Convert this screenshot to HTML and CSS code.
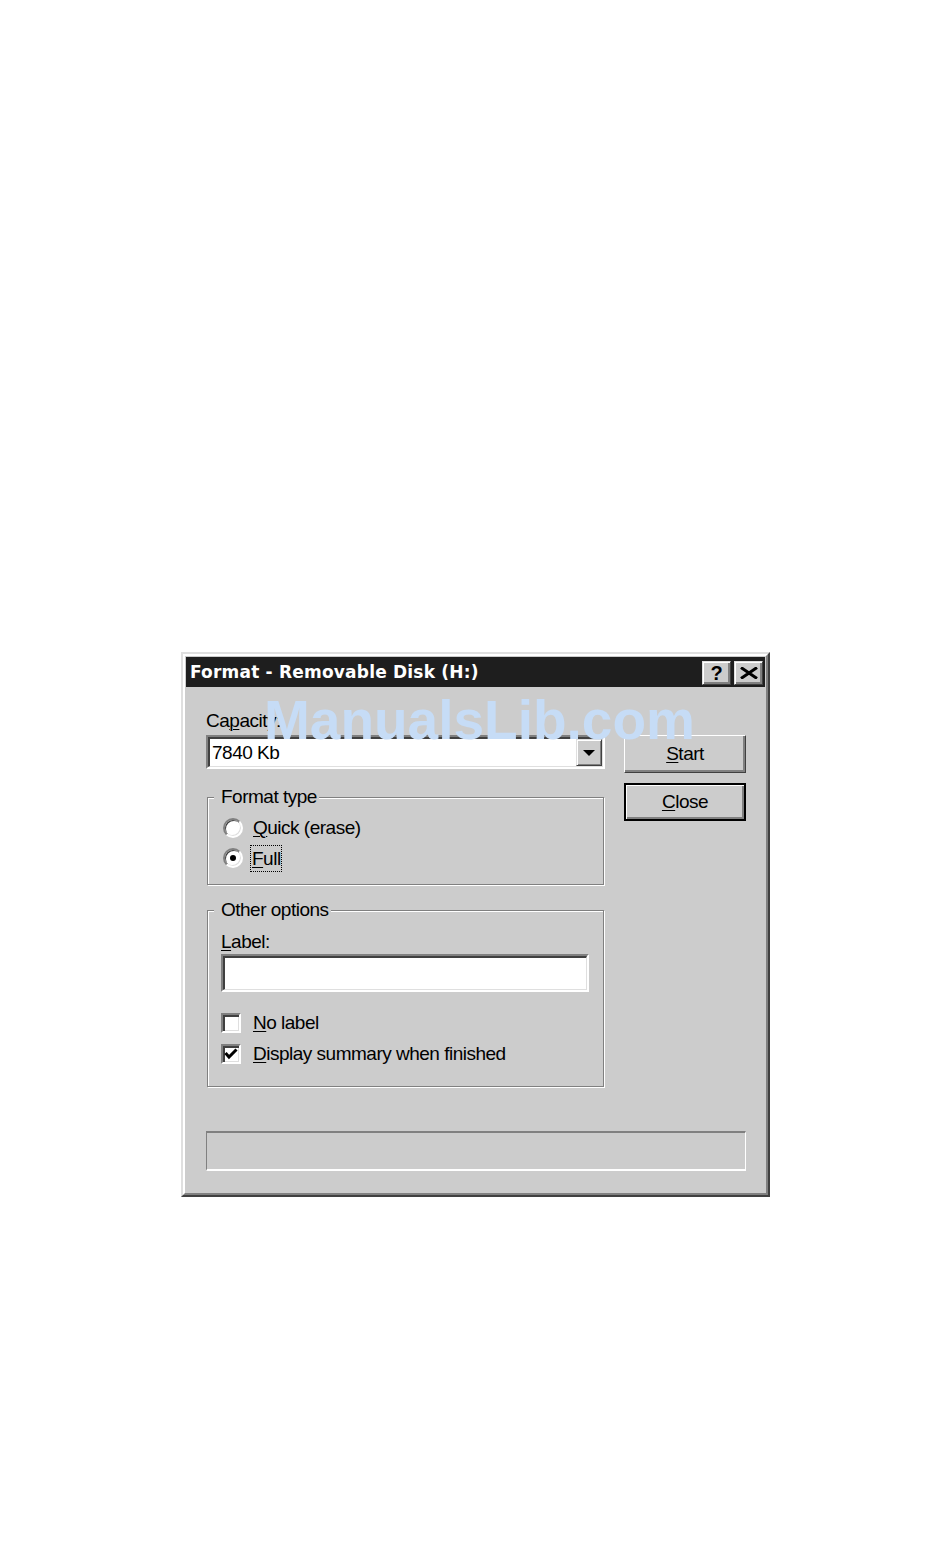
FILE: index.html
```html
<!DOCTYPE html>
<html lang="en">

<head>
    <meta charset="UTF-8">
    <title>Format - Removable Disk (H:)</title>
    <link rel="stylesheet" href="styles.css">
</head>

<body>
    <div class="page">
        <div class="window">
            <div class="window-inner">
                <div class="titlebar">
                    <span class="title">Format - Removable Disk (H:)</span>
                    <div class="caption-buttons">
                        <button class="cap-btn cap-help">?</button>
                        <button class="cap-btn">
                            <svg width="18" height="12" viewBox="0 0 18 12">
                                <path d="M1 0.5 L17 11.5 M17 0.5 L1 11.5" stroke="#000" stroke-width="3" fill="none" />
                            </svg>
                        </button>
                    </div>
                </div>

                <div class="dialog-body">
                    <div class="main">
                        <div class="left">
                            <div class="field-label">Ca<u>p</u>acity:</div>
                            <div class="sunken combo">
                                <div class="sunken-inner combo-inner">
                                    <span class="combo-text">7840 Kb</span>
                                    <span class="combo-btn">
                                        <svg width="12" height="6" viewBox="0 0 12 6">
                                            <polygon points="0,0 12,0 6,6" fill="#000" />
                                        </svg>
                                    </span>
                                </div>
                            </div>

                            <!-- Format type -->
                            <div class="group group-format">
                                <div class="group-title">Format type</div>
                                <div class="option first-radio">
                                    <span class="radio"></span>
                                    <span class="option-text"><u>Q</u>uick (erase)</span>
                                </div>
                                <div class="option">
                                    <span class="radio radio-on"></span>
                                    <span class="option-text focus"><u>F</u>ull</span>
                                </div>
                            </div>

                            <!-- Other options -->
                            <div class="group group-other">
                                <div class="group-title">Other options</div>
                                <div class="field-label label-indent"><u>L</u>abel:</div>
                                <div class="sunken text-input">
                                    <div class="sunken-inner"></div>
                                </div>
                                <div class="option check-row first-check">
                                    <span class="checkbox"></span>
                                    <span class="check-text"><u>N</u>o label</span>
                                </div>
                                <div class="option check-row">
                                    <span class="checkbox">
                                        <svg width="14" height="12" viewBox="0 0 14 12">
                                            <polyline points="1.5,5 5,9 12.5,1.5" stroke="#000" stroke-width="3" fill="none" />
                                        </svg>
                                    </span>
                                    <span class="check-text"><u>D</u>isplay summary when finished</span>
                                </div>
                            </div>
                        </div>

                        <div class="buttons">
                            <button class="btn"><u>S</u>tart</button>
                            <button class="btn btn-default"><u>C</u>lose</button>
                        </div>
                    </div>

                    <div class="progress"></div>
                </div>
            </div>

            <div class="watermark">ManualsLib.com</div>
        </div>
    </div>
</body>

</html>
```

FILE: styles.css
```css
body {
    margin: 0;
    background-color: #fff;
    font-family: "Liberation Sans", Arial, sans-serif;
    font-size: 19px;
    letter-spacing: -0.5px;
    color: #000;
}

u {
    text-decoration-thickness: 1px;
    text-underline-offset: 2px;
}

.page {
    padding: 652px 0 0 181px;
}

/* window frame */
.window {
    position: relative;
    width: 589px;
    box-sizing: border-box;
    border: 2px solid;
    border-color: #dfdfdf #404040 #404040 #dfdfdf;
    background-color: #cccccc;
}

.window-inner {
    border: 2px solid;
    border-color: #fff #808080 #808080 #fff;
    padding: 1px;
}

.titlebar {
    display: flex;
    align-items: center;
    height: 30px;
    padding: 0 2px 0 4px;
    background-color: #1e1e1e;
}

.title {
    font-family: "DejaVu Sans", sans-serif;
    font-weight: bold;
    font-size: 17px;
    letter-spacing: 0.2px;
    line-height: 30px;
    color: #fff;
    white-space: nowrap;
}

.caption-buttons {
    display: flex;
    gap: 3px;
    margin-left: auto;
    margin-top: 1px;
}

.cap-btn {
    display: flex;
    align-items: center;
    justify-content: center;
    width: 29px;
    height: 24px;
    padding: 0;
    border: 1px solid;
    border-color: #dfdfdf #404040 #404040 #dfdfdf;
    box-shadow: inset 1px 1px 0 #fff, inset -2px -2px 0 #808080;
    background-color: #cccccc;
}

.cap-help {
    font-family: "Liberation Sans", Arial, sans-serif;
    font-weight: bold;
    font-size: 20px;
    letter-spacing: 0;
    line-height: 20px;
    color: #000;
}

/* dialog contents */
.dialog-body {
    padding: 23px 19px 21px 20px;
}

.main {
    display: flex;
    gap: 19px;
}

.left {
    width: 399px;
}

.field-label {
    line-height: 22px;
    margin-bottom: 3px;
}

.sunken {
    box-sizing: border-box;
    border: 2px solid;
    border-color: #808080 #fff #fff #808080;
}

.sunken-inner {
    box-sizing: border-box;
    height: 100%;
    border-style: solid;
    border-width: 2px 1px 1px 2px;
    border-color: #404040 #dfdfdf #dfdfdf #404040;
    background-color: #fff;
}

.combo {
    height: 34px;
}

.combo-inner {
    display: flex;
}

.combo-text {
    flex: 1;
    padding-left: 2px;
    line-height: 27px;
}

.combo-btn {
    display: flex;
    align-items: center;
    justify-content: center;
    width: 26px;
    box-sizing: border-box;
    border: 1px solid;
    border-color: #dfdfdf #404040 #404040 #dfdfdf;
    box-shadow: inset 1px 1px 0 #fff, inset -1px -1px 0 #808080;
    background-color: #cccccc;
}

/* group boxes */
.group {
    margin: 0 1px;
    padding: 0 14px 11px 6px;
    border: 1px solid #808080;
    box-shadow: 1px 1px 0 #fff, inset 1px 1px 0 #fff;
}

.group-format {
    margin-top: 28px;
}

.group-other {
    margin-top: 25px;
    padding-bottom: 17px;
}

.group-title {
    width: fit-content;
    margin-top: -12px;
    padding: 0 2px 0 7px;
    line-height: 22px;
    background-color: #cccccc;
}

.option {
    display: flex;
    align-items: center;
    height: 30px;
}

.first-radio {
    margin-top: 5px;
}

.radio {
    display: flex;
    align-items: center;
    justify-content: center;
    width: 20px;
    height: 20px;
    margin-left: 9px;
    box-sizing: border-box;
    border-radius: 50%;
    border: 2px solid;
    border-color: #808080 #fff #fff #808080;
    box-shadow: inset 1px 1px 0 #404040, inset -1px -1px 0 #dfdfdf;
    background-color: #fff;
}

.radio-on::after {
    content: "";
    width: 6px;
    height: 6px;
    border-radius: 50%;
    background-color: #000;
}

.option-text {
    margin-left: 10px;
    line-height: 30px;
}

.option-text.focus {
    margin-left: 7px;
    padding: 0 0 0 1px;
    border: 1px dotted #000;
    line-height: 25px;
}

.label-indent {
    margin: 10px 0 1px 7px;
}

.text-input {
    height: 38px;
    margin-left: 7px;
}

.check-row {
    height: 31px;
}

.first-check {
    margin-top: 15px;
}

.checkbox {
    display: flex;
    align-items: center;
    justify-content: center;
    width: 20px;
    height: 20px;
    margin-left: 7px;
    box-sizing: border-box;
    border-style: solid;
    border-width: 2px;
    border-color: #808080 #fff #fff #808080;
    box-shadow: inset 2px 2px 0 #404040, inset -1px -1px 0 #dfdfdf;
    background-color: #fff;
}

.check-text {
    margin-left: 12px;
    line-height: 31px;
}

/* push buttons */
.buttons {
    display: flex;
    flex-direction: column;
    gap: 10px;
    width: 122px;
    margin-top: 25px;
}

.btn {
    height: 38px;
    padding: 0;
    font: inherit;
    letter-spacing: inherit;
    line-height: 22px;
    color: #000;
    border: 1px solid;
    border-color: #fff #404040 #404040 #fff;
    box-shadow: inset -2px -2px 0 #808080;
    background-color: #cccccc;
}

.btn-default {
    border: 2px solid #000;
    box-shadow: inset 1px 1px 0 #fff, inset -2px -2px 0 #808080;
}

.progress {
    height: 40px;
    margin-top: 44px;
    box-sizing: border-box;
    border-style: solid;
    border-width: 2px 1px;
    border-color: #808080 #fff #fff #808080;
}

.watermark {
    position: absolute;
    left: 81px;
    top: 39px;
    font-family: "Liberation Sans", Arial, sans-serif;
    font-weight: bold;
    font-size: 55px;
    letter-spacing: 0;
    line-height: 55px;
    color: #c6dcf6;
    white-space: nowrap;
    pointer-events: none;
}
```
